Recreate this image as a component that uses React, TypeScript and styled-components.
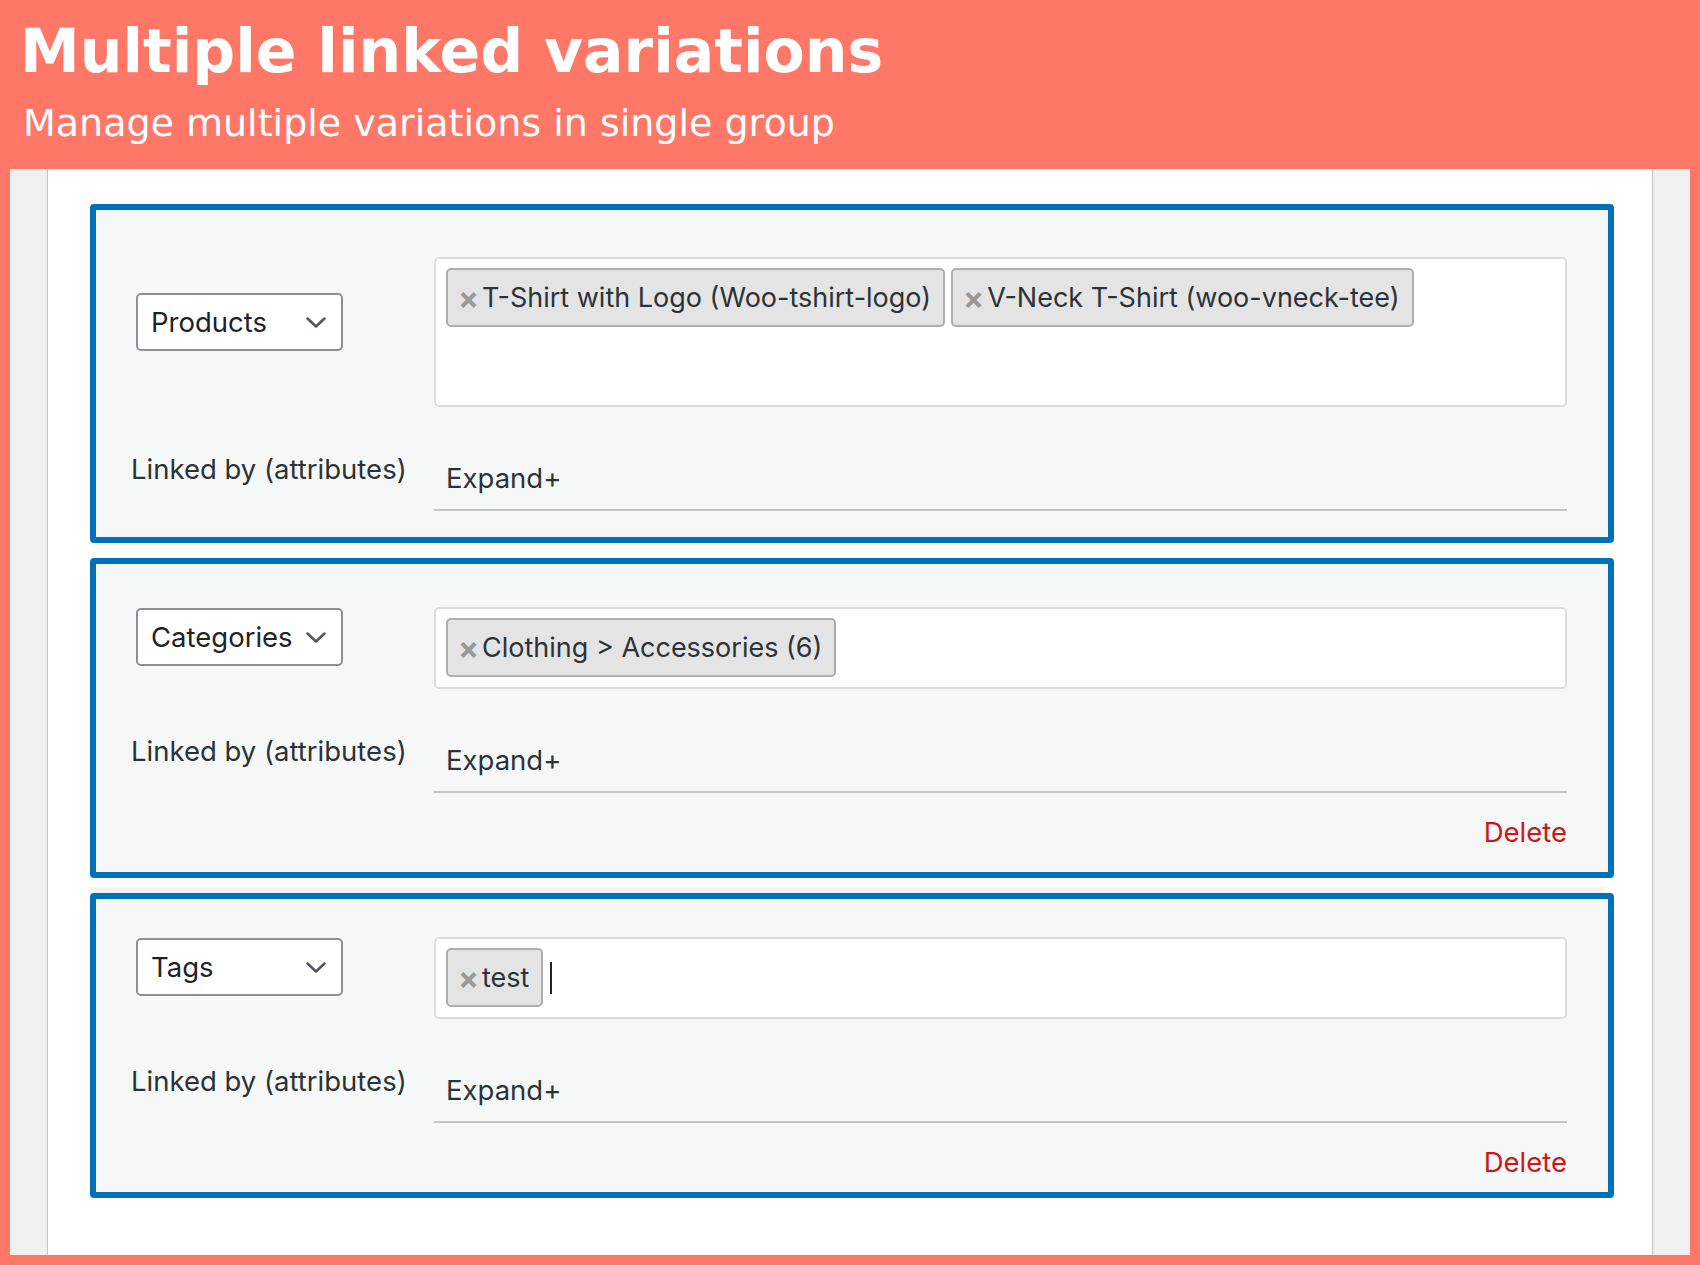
import React from "react";
import styled, { createGlobalStyle, css } from "styled-components";

const GlobalStyle = createGlobalStyle`
  html, body { margin: 0; padding: 0; background: #ff7867; }
  body { font-family: Inter, "Liberation Sans", Arial, sans-serif; -webkit-font-smoothing: antialiased; }
  * { box-sizing: border-box; }
`;

const Page = styled.div`
  width: 1700px;
  min-height: 1265px;
  background: #ff7867;
  display: flex;
  flex-direction: column;
`;

const Header = styled.header`
  height: 169px;
  padding: 21px 0 0 20px;
  color: #ffffff;
  font-family: "DejaVu Sans", sans-serif;
`;

const Title = styled.h1`
  margin: 0;
  font-size: 60px;
  line-height: 60px;
  font-weight: 700;
`;

const Subtitle = styled.p`
  margin: 23px 0 0 3px;
  font-size: 38px;
  line-height: 38px;
  font-weight: 400;
`;

const Frame = styled.div`
  flex: 1;
  display: flex;
  padding: 0 10px 10px;
`;

const Canvas = styled.div`
  flex: 1;
  display: flex;
  background: #f0f0f0;
  padding: 0 37px;
`;

const Panel = styled.main`
  flex: 1;
  display: flex;
  flex-direction: column;
  gap: 15px;
  background: #ffffff;
  border-left: 1px solid #c3c4c7;
  border-right: 1px solid #c3c4c7;
  padding: 35px 38px 56px 42px;
`;

const Box = styled.section<{ $padTop: number; $padBottom: number; $lifted?: boolean }>`
  background: #f6f7f7;
  border: 6px solid #0071b8;
  border-radius: 4px;
  padding: ${(p) => p.$padTop}px 41px ${(p) => p.$padBottom}px 35px;
  display: grid;
  grid-template-columns: 303px 1fr;
  align-items: start;
  ${(p) =>
    p.$lifted &&
    css`
      box-shadow: -5px -11px 0 -5px #f3f4f4;
    `}
`;

const SelectCell = styled.div<{ $offset: number }>`
  padding: ${(p) => p.$offset}px 0 0 5px;
`;

const Select = styled.div`
  width: 207px;
  height: 58px;
  display: flex;
  align-items: center;
  justify-content: space-between;
  padding: 0 15px 0 13px;
  background: #ffffff;
  border: 2px solid #8c8f94;
  border-radius: 5px;
  font-size: 27.5px;
  color: #1d2327;
`;

const TagBox = styled.div<{ $minHeight: number }>`
  min-height: ${(p) => p.$minHeight}px;
  background: #ffffff;
  border: 2px solid #dcdcde;
  border-radius: 5px;
  padding: 9px 10px 10px;
  display: flex;
  flex-wrap: wrap;
  align-items: flex-start;
  gap: 6px;
`;

const Chip = styled.span`
  display: inline-flex;
  align-items: center;
  height: 59px;
  padding: 0 12px 0 10px;
  background: #e4e4e4;
  border: 2px solid #aeaeae;
  border-radius: 5px;
  font-size: 27px;
  line-height: 55px;
  color: #2c3338;
  white-space: nowrap;
`;

const Remove = styled.span`
  color: #999999;
  font-weight: 700;
  font-size: 31px;
  margin-right: 3px;
`;

const Caret = styled.span`
  align-self: center;
  width: 2px;
  height: 32px;
  margin-left: 1px;
  background: #1d2327;
`;

const Label = styled.div`
  margin-top: 42px;
  font-size: 27.5px;
  line-height: 40px;
  color: #2c3338;
  white-space: nowrap;
`;

const Field = styled.div`
  margin-top: 51px;
  padding: 0 0 11px 12px;
  font-size: 27.5px;
  line-height: 40px;
  color: #2c3338;
  border-bottom: 2px solid #c3c4c7;
`;

const Delete = styled.div`
  grid-column: 1 / -1;
  margin-top: 19px;
  text-align: right;
  font-size: 27.5px;
  line-height: 40px;
  color: #cc1818;
`;

const Chevron = () => (
  <svg width="20" height="11" viewBox="0 0 20 11" fill="none">
    <polyline points="1.5,1.5 10,9.5 18.5,1.5" stroke="#50575e" strokeWidth="2.5" strokeLinecap="round" strokeLinejoin="round" />
  </svg>
);

type Group = {
  kind: string;
  chips: string[];
  padTop: number;
  padBottom: number;
  selectOffset: number;
  minHeight: number;
  deletable: boolean;
  caret?: boolean;
  lifted?: boolean;
};

const groups: Group[] = [
  {
    kind: "Products",
    chips: ["T-Shirt with Logo (Woo-tshirt-logo)", "V-Neck T-Shirt (woo-vneck-tee)"],
    padTop: 47,
    padBottom: 26,
    selectOffset: 36,
    minHeight: 150,
    deletable: false,
  },
  {
    kind: "Categories",
    chips: ["Clothing > Accessories (6)"],
    padTop: 43,
    padBottom: 20,
    selectOffset: 1,
    minHeight: 82,
    deletable: true,
  },
  {
    kind: "Tags",
    chips: ["test"],
    padTop: 38,
    padBottom: 10,
    selectOffset: 1,
    minHeight: 82,
    deletable: true,
    caret: true,
    lifted: true,
  },
];

export default function App() {
  return (
    <>
      <GlobalStyle />
      <Page>
        <Header>
          <Title>Multiple linked variations</Title>
          <Subtitle>Manage multiple variations in single group</Subtitle>
        </Header>
        <Frame>
          <Canvas>
            <Panel>
              {groups.map((g) => (
                <Box key={g.kind} $padTop={g.padTop} $padBottom={g.padBottom} $lifted={g.lifted}>
                  <SelectCell $offset={g.selectOffset}>
                    <Select>
                      <span>{g.kind}</span>
                      <Chevron />
                    </Select>
                  </SelectCell>
                  <TagBox $minHeight={g.minHeight}>
                    {g.chips.map((c) => (
                      <Chip key={c}>
                        <Remove>×</Remove>
                        {c}
                      </Chip>
                    ))}
                    {g.caret && <Caret />}
                  </TagBox>
                  <Label>Linked by (attributes)</Label>
                  <Field>Expand+</Field>
                  {g.deletable && <Delete>Delete</Delete>}
                </Box>
              ))}
            </Panel>
          </Canvas>
        </Frame>
      </Page>
    </>
  );
}
